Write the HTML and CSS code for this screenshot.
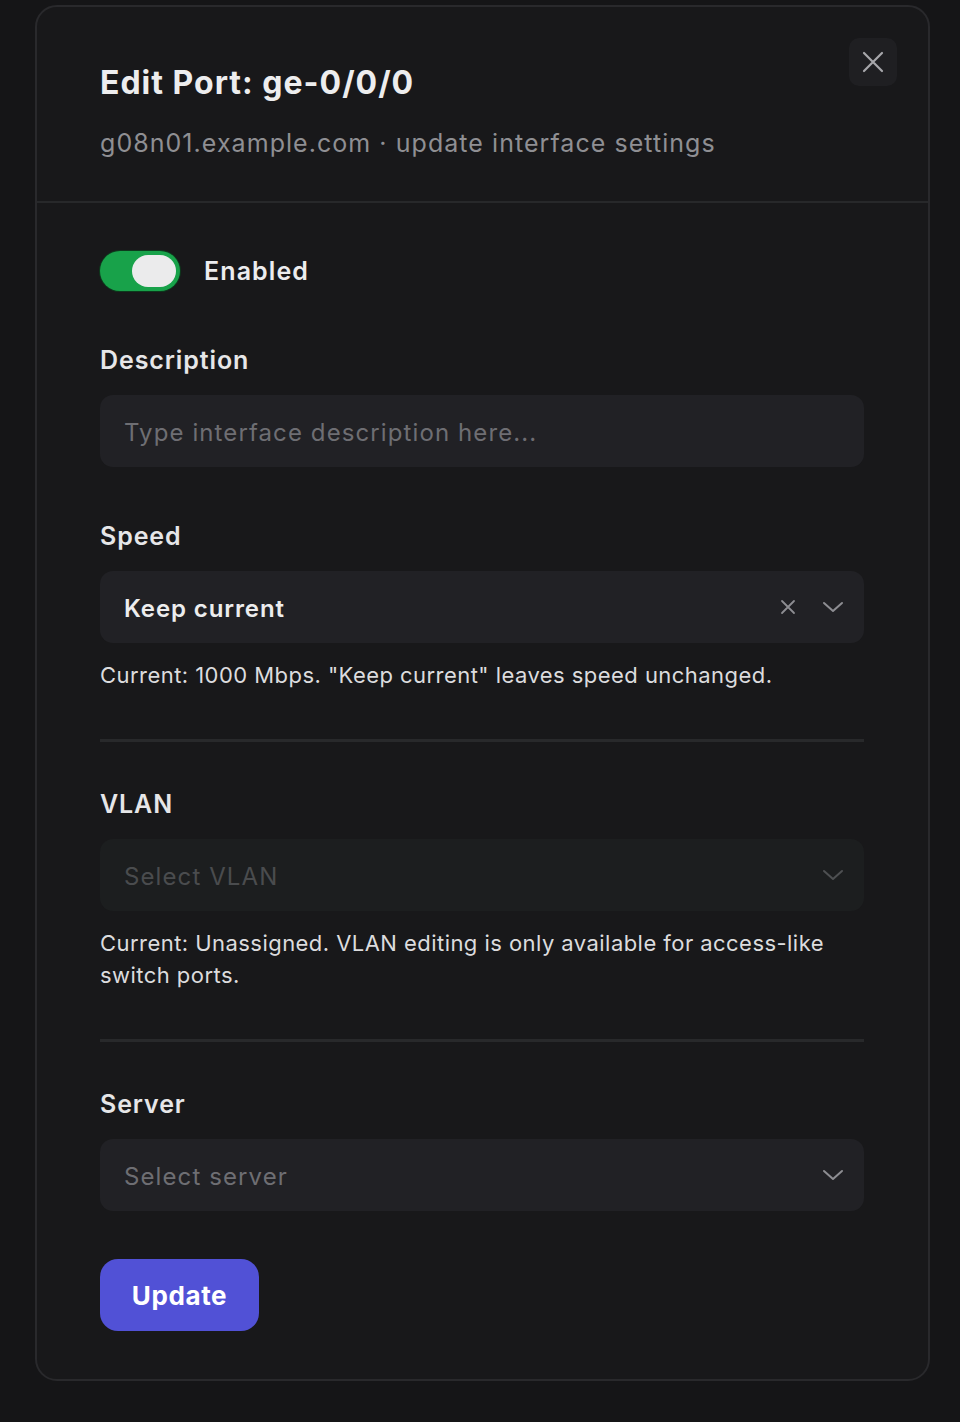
FILE: index.html
```html
<!DOCTYPE html>
<html lang="en">
<head>
<meta charset="utf-8">
<title>Edit Port</title>
<link rel="stylesheet" href="styles.css">
</head>
<body>
<div class="modal">
  <header class="modal-header">
    <div class="titles">
      <h1 class="title">Edit Port: ge-0/0/0</h1>
      <p class="subtitle">g08n01.example.com · update interface settings</p>
    </div>
    <button class="close" aria-label="Close">
      <svg width="22" height="22" viewBox="0 0 22 22"><path d="M2 2L20 20M20 2L2 20" stroke="#a7a7ab" stroke-width="2.2" stroke-linecap="round" fill="none"/></svg>
    </button>
  </header>
  <div class="modal-body">
    <div class="toggle-row">
      <span class="toggle"><span class="knob"></span></span>
      <span class="toggle-label">Enabled</span>
    </div>

    <div class="field">
      <label class="label">Description</label>
      <div class="input"><span class="placeholder">Type interface description here...</span></div>
    </div>

    <div class="field">
      <label class="label">Speed</label>
      <div class="input select">
        <span class="value">Keep current</span>
        <span class="icons">
          <svg class="clear" width="16" height="16" viewBox="0 0 16 16"><path d="M2 2L14 14M14 2L2 14" stroke="#8d8d92" stroke-width="1.8" stroke-linecap="round" fill="none"/></svg>
          <svg class="chev" width="22" height="12" viewBox="0 0 22 12"><path d="M2 2L11 10L20 2" stroke="#8d8d92" stroke-width="2" stroke-linecap="round" stroke-linejoin="round" fill="none"/></svg>
        </span>
      </div>
      <p class="help">Current: 1000 Mbps. "Keep current" leaves speed unchanged.</p>
    </div>

    <hr class="sep">

    <div class="field">
      <label class="label">VLAN</label>
      <div class="input select disabled">
        <span class="placeholder dim">Select VLAN</span>
        <span class="icons">
          <svg class="chev" width="22" height="12" viewBox="0 0 22 12"><path d="M2 2L11 10L20 2" stroke="#4e5052" stroke-width="2" stroke-linecap="round" stroke-linejoin="round" fill="none"/></svg>
        </span>
      </div>
      <p class="help">Current: Unassigned. VLAN editing is only available for access-like switch ports.</p>
    </div>

    <hr class="sep">

    <div class="field">
      <label class="label">Server</label>
      <div class="input select">
        <span class="placeholder">Select server</span>
        <span class="icons">
          <svg class="chev" width="22" height="12" viewBox="0 0 22 12"><path d="M2 2L11 10L20 2" stroke="#8d8d92" stroke-width="2" stroke-linecap="round" stroke-linejoin="round" fill="none"/></svg>
        </span>
      </div>
    </div>

    <button class="primary">Update</button>
  </div>
</div>
</body>
</html>
```

FILE: styles.css
```css
* { box-sizing: border-box; }
html, body { margin: 0; padding: 0; }
body {
  background: #151517;
  font-family: "Inter", "Open Sans", sans-serif;
  color: #e6e6e8;
  width: 960px;
  height: 1422px;
  overflow: hidden;
}
.modal {
  margin: 5px 0 0 35px;
  width: 895px;
  height: 1376px;
  background: #18181a;
  border: 2px solid #29292c;
  border-radius: 22px;
  display: flex;
  flex-direction: column;
}
.modal-header {
  display: flex;
  justify-content: space-between;
  align-items: flex-start;
  padding: 56px 31px 42px 63px;
  border-bottom: 2px solid #27282a;
}
.title {
  margin: 0;
  font-size: 32px;
  line-height: 40px;
  font-weight: 700;
  color: #ededee;
  letter-spacing: 1px;
}
.subtitle {
  margin: 24px 0 0;
  font-size: 25px;
  line-height: 32px;
  color: #8f8f93;
  letter-spacing: 1.05px;
}
.close {
  margin-top: -25px;
  width: 48px;
  height: 48px;
  border: none;
  border-radius: 10px;
  background: #1f1f22;
  display: flex;
  align-items: center;
  justify-content: center;
  padding: 0;
}
.modal-body {
  padding: 48px 64px 0 63px;
  display: flex;
  flex-direction: column;
}
.toggle-row {
  display: flex;
  align-items: center;
  gap: 24px;
  height: 40px;
}
.toggle {
  width: 80px;
  height: 40px;
  border-radius: 20px;
  background: #18a24a;
  display: flex;
  align-items: center;
  justify-content: flex-end;
  padding-right: 4px;
  box-shadow: 0 0 0 1px #0d3a1d;
}
.knob {
  width: 44px;
  height: 32px;
  border-radius: 16px;
  background: #ebebec;
}
.toggle-label {
  font-size: 25px;
  line-height: 32px;
  font-weight: 600;
  color: #ececee;
  letter-spacing: 1.1px;
}
.field { display: flex; flex-direction: column; }
.toggle-row + .field { margin-top: 53px; }
.label {
  font-size: 25px;
  line-height: 32px;
  font-weight: 600;
  color: #e6e6e8;
  letter-spacing: 0.9px;
}
.input {
  margin-top: 19px;
  height: 72px;
  border-radius: 13px;
  background: #212125;
  display: flex;
  align-items: center;
  padding: 2px 20px 0 24px;
  font-size: 24px;
  letter-spacing: 1.1px;
}
.select { justify-content: space-between; }
.placeholder { color: #6e6e73; }
.placeholder.dim { color: #4a4c4e; }
.value { color: #ededee; font-weight: 600; letter-spacing: 0.9px; }
.disabled { background: #1c1e1f; }
.icons { display: flex; align-items: center; gap: 26px; margin-top: -2px; }
.help {
  margin: 16px 0 0;
  font-size: 22px;
  line-height: 32px;
  color: #dcdcde;
  letter-spacing: 0.45px;
}
.sep {
  margin: 48px 0 0;
  border: none;
  height: 3px;
  background: #28292b;
}
.sep + .field { margin-top: 46px; }
.field + .field { margin-top: 53px; }
.primary {
  margin-top: 48px;
  align-self: flex-start;
  width: 159px;
  height: 72px;
  border: none;
  border-radius: 18px;
  background: #5151d6;
  color: #ffffff;
  font-family: inherit;
  font-size: 26px;
  font-weight: 700;
  letter-spacing: 0.6px;
}
```
